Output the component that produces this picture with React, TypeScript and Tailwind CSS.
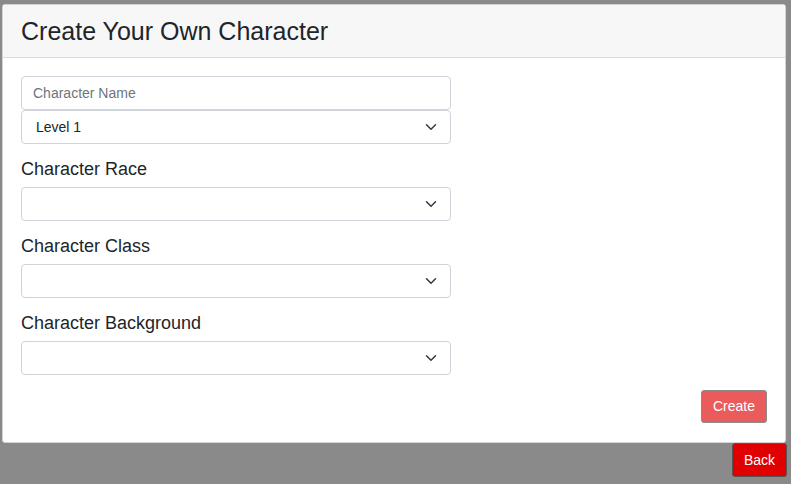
const font = { fontFamily: '"Liberation Sans", Arial, sans-serif' };

function Chevron() {
  return (
    <svg width="12" height="12" viewBox="0 0 16 16" className="text-[#343a40]">
      <path d="M2 5l6 6 6-6" fill="none" stroke="currentColor" strokeWidth="2" strokeLinecap="round" strokeLinejoin="round" />
    </svg>
  );
}

function SelectBox({ value }: { value?: string }) {
  return (
    <div className="flex h-[34px] w-[430px] items-center justify-between rounded-[4px] border border-[#ced4da] bg-white pl-[14px] pr-[13px] text-[14px] text-[#212529]">
      <span>{value ?? ''}</span>
      <Chevron />
    </div>
  );
}

function Field({ label }: { label: string }) {
  return (
    <div className="flex flex-col">
      <label className="mb-[7px] mt-[14px] text-[18px] leading-[22px] text-[#212529]">{label}</label>
      <SelectBox />
    </div>
  );
}

export default function App() {
  return (
    <div style={font} className="relative h-[484px] w-[791px] overflow-hidden bg-[#8a8a8a]">
      <div className="ml-[2px] mt-[4px] w-[784px] rounded-[3px] border border-[#d4d4d4] bg-white">
        <div className="flex h-[53px] items-center border-b border-[#dcdcdc] bg-[#f7f7f7] pl-[18px]">
          <h1 className="text-[25px] leading-none text-[#212529]">Create Your Own Character</h1>
        </div>
        <div className="flex flex-col px-[18px] pb-[19px] pt-[18px]">
          <input
            placeholder="Character Name"
            className="h-[34px] w-[430px] rounded-[4px] border border-[#ced4da] px-[11px] text-[14px] text-[#212529] placeholder:text-[#6c757d] outline-none"
          />
          <SelectBox value="Level 1" />
          <Field label="Character Race" />
          <Field label="Character Class" />
          <Field label="Character Background" />
          <div className="mt-[15px] flex justify-end">
            <button className="h-[33px] w-[66px] rounded-[3px] border border-[#8a8a8a] bg-[#ea5b5b] text-[14px] text-white">
              Create
            </button>
          </div>
        </div>
      </div>
      <div className="flex justify-end pr-[4px]">
        <button className="h-[34px] w-[55px] rounded-[3px] border border-[#555] bg-[#e00000] text-[14px] text-white">
          Back
        </button>
      </div>
    </div>
  );
}
